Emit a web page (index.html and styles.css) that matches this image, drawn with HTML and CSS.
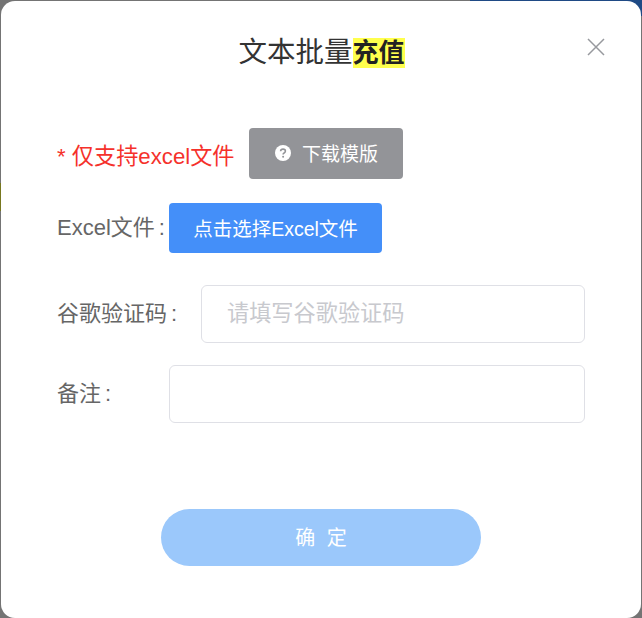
FILE: index.html
```html
<!DOCTYPE html>
<html lang="zh-CN">
<head>
    <meta charset="UTF-8">
    <meta name="viewport" content="width=device-width, initial-scale=1.0">
    <title>文本批量充值</title>
    <link rel="stylesheet" href="styles.css">
</head>
<body>
    <div class="top-strip"></div>
    <div class="left-strip"></div>
    <div class="modal">
        <div class="modal-head">
            <h2 class="title">文本批量<mark class="title-mark">充值</mark></h2>
            <button class="close" aria-label="close">
                <svg width="18" height="18" viewBox="0 0 18 18">
                    <path d="M1 1L17 17M17 1L1 17" stroke="#97999e" stroke-width="1.5" fill="none"/>
                </svg>
            </button>
        </div>
        <div class="row row-tip">
            <span class="tip">* 仅支持excel文件</span>
            <button class="btn btn-gray">
                <svg class="help" width="16" height="16" viewBox="0 0 16 16">
                    <circle cx="8" cy="8" r="8" fill="#fff"/>
                    <path d="M5.6 6.2C5.7 4.8 6.7 4.1 8 4.1C9.4 4.1 10.4 4.9 10.4 6.1C10.4 7 9.9 7.5 9.1 8C8.4 8.4 8.1 8.7 8.1 9.5" stroke="#939498" stroke-width="1.6" fill="none"/>
                    <circle cx="8.1" cy="11.7" r="1" fill="#939498"/>
                </svg>
                下载模版
            </button>
        </div>
        <div class="row row-file">
            <label class="label label-file">Excel文件<span class="colon">:</span></label>
            <button class="btn btn-blue">点击选择Excel文件</button>
        </div>
        <div class="row row-code">
            <label class="label label-code">谷歌验证码<span class="colon">:</span></label>
            <input class="input" type="text" placeholder="请填写谷歌验证码">
        </div>
        <div class="row row-note">
            <label class="label label-note">备注<span class="colon">:</span></label>
            <input class="input" type="text">
        </div>
        <div class="footer">
            <button class="submit">确 定</button>
        </div>
    </div>
</body>
</html>
```

FILE: styles.css
```css
html, body {
    height: 100%;
}
body {
    margin: 0;
    padding: 1px 1px 0 1px;
    box-sizing: border-box;
    height: 618px;
    overflow: hidden;
    position: relative;
    background-color: #747474;
    font-family: "Liberation Sans", "Noto Sans CJK SC", sans-serif;
}
.top-strip {
    position: absolute;
    top: 0;
    left: 470px;
    width: 172px;
    height: 16px;
    background-color: #1f4a85;
}
.left-strip {
    position: absolute;
    top: 183px;
    left: 0;
    width: 1px;
    height: 28px;
    background-color: #77771f;
}
.modal {
    position: relative;
    width: 640px;
    height: 617px;
    background-color: #fff;
    border-radius: 14px;
    padding: 0 56px;
    box-sizing: border-box;
}
.modal-head {
    height: 127px;
    padding: 36px 0 0 1px;
    box-sizing: border-box;
    text-align: center;
}
.title {
    margin: 0;
    font-size: 28.5px;
    line-height: 31px;
    font-weight: 400;
    color: #333;
}
.title-mark {
    font-size: 26px;
    font-weight: 700;
    background-color: #ffff4d;
    color: #222;
}
.close {
    position: absolute;
    top: 37px;
    right: 36px;
    padding: 0;
    border: none;
    background: none;
    display: flex;
}
.row {
    display: flex;
    align-items: center;
}
.row-tip {
    height: 51px;
}
.row-file {
    margin-top: 24px;
    height: 50px;
}
.row-code {
    margin-top: 32px;
    height: 58px;
}
.row-note {
    margin-top: 22px;
    height: 58px;
}
.tip {
    width: 192px;
    flex-shrink: 0;
    font-size: 22.2px;
    color: #f5312b;
}
.label {
    font-size: 22px;
    color: #666;
    flex-shrink: 0;
    padding-bottom: 6px;
}
.colon {
    margin-left: 4px;
}
.label-file {
    width: 112px;
}
.label-code {
    width: 144px;
}
.label-note {
    width: 112px;
}
.btn {
    border: none;
    border-radius: 4px;
    color: #fff;
    font-family: inherit;
    font-size: 19.5px;
    padding: 0 0 2px;
    display: flex;
    align-items: center;
    justify-content: center;
}
.btn-gray {
    width: 154px;
    height: 51px;
    padding-left: 1px;
    background-color: #939498;
    gap: 11px;
    font-size: 19px;
}
.btn-blue {
    width: 213px;
    height: 50px;
    background-color: #448ff9;
}
.input {
    flex: 1;
    min-width: 0;
    height: 58px;
    padding: 0 25px;
    box-sizing: border-box;
    border: 1px solid #dfe0e6;
    border-radius: 6px;
    font-family: inherit;
    font-size: 22.2px;
    outline: none;
}
.input::placeholder {
    color: #c8c9ce;
}
.footer {
    margin-top: 86px;
    padding-left: 104px;
}
.submit {
    width: 320px;
    height: 57px;
    padding: 0 0 2px 2px;
    border: none;
    border-radius: 29px;
    background-color: #9bc8fb;
    color: #fff;
    font-family: inherit;
    font-size: 20px;
    letter-spacing: 2px;
    word-spacing: 2px;
}
```
